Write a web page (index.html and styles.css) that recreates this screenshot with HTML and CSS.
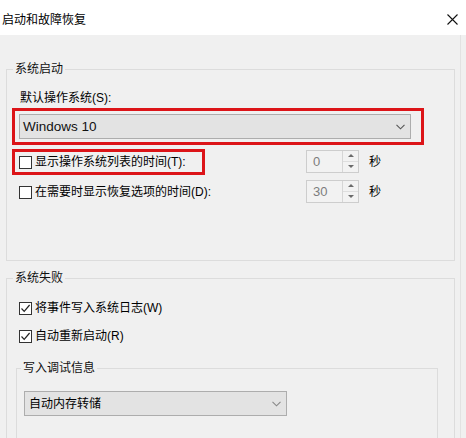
FILE: index.html
```html
<!DOCTYPE html>
<html lang="zh-CN">
<head>
<meta charset="utf-8">
<title>启动和故障恢复</title>
<link rel="stylesheet" href="styles.css">
</head>
<body>
<div class="titlebar">
  <span class="title">启动和故障恢复</span>
  <svg class="close" width="11" height="11" viewBox="0 0 11 11"><path d="M0.5 0.5 L10.5 10.5 M10.5 0.5 L0.5 10.5" stroke="#111" stroke-width="1.1" fill="none"/></svg>
</div>
<div class="main">
  <fieldset class="group g1">
    <legend>系统启动</legend>
    <div class="field-label">默认操作系统(S):</div>
    <div class="mark mark-select">
      <div class="select select-os">
        <span>Windows 10</span>
        <svg width="9" height="6" viewBox="0 0 9 6"><path d="M0.5 0.8 L4.5 4.8 L8.5 0.8" stroke="#555" stroke-width="1.1" fill="none"/></svg>
      </div>
    </div>
    <div class="timer-row first">
      <div class="mark mark-check">
        <span class="cb"></span><span>显示操作系统列表的时间(T):</span>
      </div>
      <div class="spin"><span class="val">0</span><span class="btns"><span class="up"></span><span class="down"></span></span></div>
      <span class="unit">秒</span>
    </div>
    <div class="timer-row">
      <div class="mark mark-check ghost">
        <span class="cb"></span><span>在需要时显示恢复选项的时间(D):</span>
      </div>
      <div class="spin"><span class="val">30</span><span class="btns"><span class="up"></span><span class="down"></span></span></div>
      <span class="unit">秒</span>
    </div>
  </fieldset>
  <fieldset class="group g2">
    <legend>系统失败</legend>
    <div class="check-row first">
      <span class="cb"><svg width="11" height="11" viewBox="0 0 11 11"><path d="M1.5 5.5 L4.2 8.3 L9.6 2" stroke="#222" stroke-width="1.2" fill="none"/></svg></span>
      <span>将事件写入系统日志(W)</span>
    </div>
    <div class="check-row">
      <span class="cb"><svg width="11" height="11" viewBox="0 0 11 11"><path d="M1.5 5.5 L4.2 8.3 L9.6 2" stroke="#222" stroke-width="1.2" fill="none"/></svg></span>
      <span>自动重新启动(R)</span>
    </div>
    <fieldset class="group g3">
      <legend>写入调试信息</legend>
      <div class="select select-dump">
        <span>自动内存转储</span>
        <svg width="9" height="6" viewBox="0 0 9 6"><path d="M0.5 0.8 L4.5 4.8 L8.5 0.8" stroke="#888" stroke-width="1.1" fill="none"/></svg>
      </div>
    </fieldset>
  </fieldset>
</div>
</body>
</html>
```

FILE: styles.css
```css
html, body {
  margin: 0;
  padding: 0;
}
body {
  width: 466px;
  height: 438px;
  overflow: hidden;
  background: #f0f0f0;
  font-family: "Liberation Sans", "Noto Sans CJK SC", sans-serif;
  font-size: 12px;
  line-height: 16px;
  color: #000;
}
.titlebar {
  height: 35px;
  box-sizing: border-box;
  background: #fff;
  display: flex;
  align-items: center;
  justify-content: space-between;
  padding: 4px 8px 0 2px;
}
.title {
  font-size: 12px;
}
.close {
  display: block;
}
.main {
  width: 461px;
  height: 403px;
  overflow: hidden;
  border-right: 1px solid #e2e2e2;
  padding-top: 26px;
  box-sizing: border-box;
}
.group {
  margin: 0 5px 0 6px;
  padding: 0;
  border: 1px solid #dcdcdc;
  min-inline-size: 0;
}
.group legend {
  margin-left: 6px;
  padding: 0 2px;
  line-height: 16px;
  font-size: 12px;
  color: #111;
}
.g1 {
  padding-bottom: 53px;
}
.field-label {
  margin: 13px 0 2px 13px;
}
.mark {
  border: 3px solid #dc1418;
  box-sizing: border-box;
}
.mark-select {
  margin-left: 5px;
  width: 412px;
  padding: 3px 10px 3px 4px;
}
.select {
  height: 25px;
  box-sizing: border-box;
  border: 1px solid #adadad;
  background: #e3e3e3;
  display: flex;
  align-items: center;
  justify-content: space-between;
  padding: 0 5px 0 3px;
}
.select svg {
  display: block;
}
.select-os {
  font-size: 13.5px;
  color: #111;
}
.timer-row {
  display: flex;
  align-items: center;
  height: 30px;
  margin-left: 5px;
}
.timer-row.first {
  margin-top: 2px;
}
.mark-check {
  width: 193px;
  height: 26px;
  flex-shrink: 0;
  display: flex;
  align-items: center;
  gap: 3px;
  padding: 0 4px;
  white-space: nowrap;
}
.mark-check.ghost {
  border-color: transparent;
}
.cb {
  width: 13px;
  height: 13px;
  box-sizing: border-box;
  border: 1px solid #333;
  background: #fff;
  flex-shrink: 0;
  display: flex;
  align-items: center;
  justify-content: center;
}
.cb svg {
  display: block;
}
.spin {
  margin-left: 101px;
  margin-bottom: 2px;
  width: 53px;
  height: 23px;
  box-sizing: border-box;
  border: 1px solid #cdcdcd;
  background: #f2f2f2;
  display: flex;
  flex-shrink: 0;
}
.spin .val {
  flex: 1;
  padding-left: 6px;
  font-size: 13px;
  line-height: 21px;
  color: #7d7d7d;
}
.spin .btns {
  width: 15px;
  border-left: 1px solid #d6d6d6;
  display: flex;
  flex-direction: column;
}
.spin .up, .spin .down {
  flex: 1;
  display: flex;
  align-items: center;
  justify-content: center;
}
.spin .up {
  border-bottom: 1px solid #dedede;
}
.spin .up::after {
  content: "";
  border-left: 3px solid transparent;
  border-right: 3px solid transparent;
  border-bottom: 3px solid #6a6a6a;
}
.spin .down::after {
  content: "";
  border-left: 3px solid transparent;
  border-right: 3px solid transparent;
  border-top: 3px solid #6a6a6a;
}
.unit {
  margin-left: 10px;
}
.g2 {
  margin-top: 9px;
  padding-bottom: 20px;
}
.check-row {
  display: flex;
  align-items: center;
  gap: 3px;
  height: 28px;
  padding-left: 12px;
}
.check-row.first {
  margin-top: 8px;
}
.g3 {
  margin: 10px 16px 0 9px;
  padding-bottom: 40px;
}
.g3 legend {
  margin-left: 4px;
}
.select-dump {
  margin: 15px 0 0 7px;
  width: 263px;
  padding-left: 4px;
}
```
